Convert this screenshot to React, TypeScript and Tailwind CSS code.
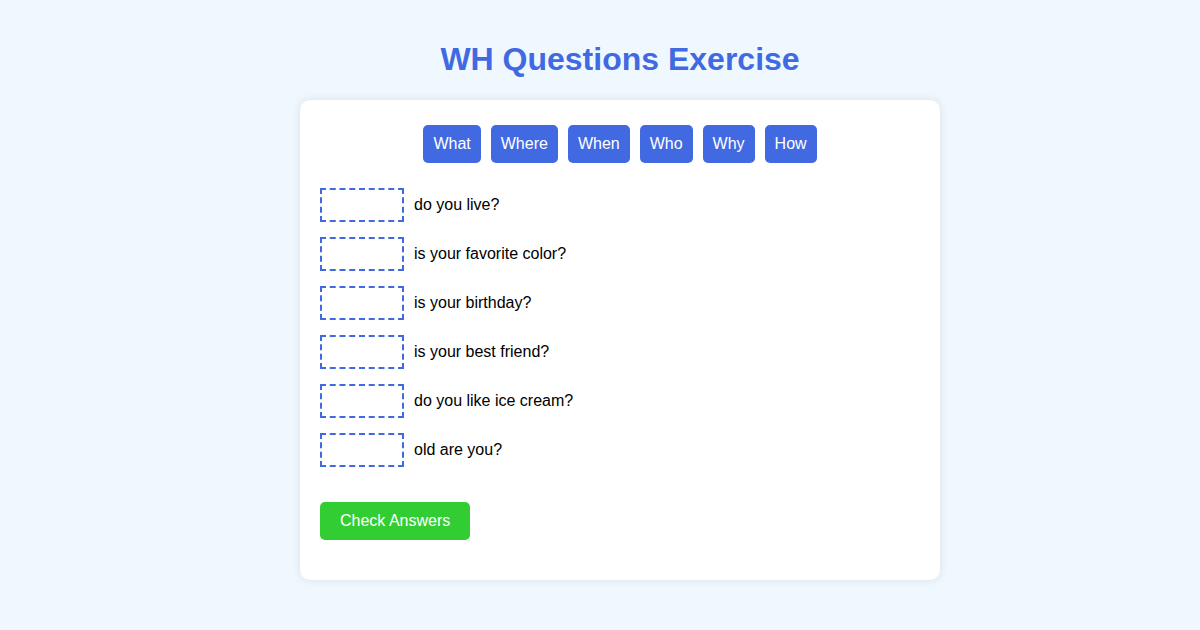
const words = ['What', 'Where', 'When', 'Who', 'Why', 'How'];

const questions = [
  'do you live?',
  'is your favorite color?',
  'is your birthday?',
  'is your best friend?',
  'do you like ice cream?',
  'old are you?',
];

export default function App() {
  return (
    <div className="min-h-[630px] bg-[#f0f8ff] pt-5 pl-10 font-['Liberation_Sans',Arial,sans-serif] text-black">
      <h1 className="mt-[21px] mb-[22px] text-center text-[32px] font-bold leading-[37px] text-[#4169e1]">
        WH Questions Exercise
      </h1>

      <div className="mx-auto w-[640px] rounded-[10px] bg-white p-5 pb-10 shadow-[0_0_10px_rgba(0,0,0,0.1)]">
        {/* word bank */}
        <div className="mb-5 flex flex-wrap justify-center">
          {words.map((w) => (
            <button
              key={w}
              className="m-[5px] rounded-[5px] bg-[#4169e1] px-[10px] py-[10px] text-base leading-[18px] text-white"
            >
              {w}
            </button>
          ))}
        </div>

        {/* sentences with drop slots */}
        <div>
          {questions.map((q) => (
            <div key={q} className="mb-[15px] flex items-center">
              <div className="mr-[10px] h-[34px] w-[84px] border-2 border-dashed border-[#4169e1]" />
              <span className="text-base">{q}</span>
            </div>
          ))}
        </div>

        <button className="mt-5 rounded-[5px] bg-[#32cd32] px-5 py-[10px] text-base leading-[18px] text-white">
          Check Answers
        </button>
      </div>
    </div>
  );
}
